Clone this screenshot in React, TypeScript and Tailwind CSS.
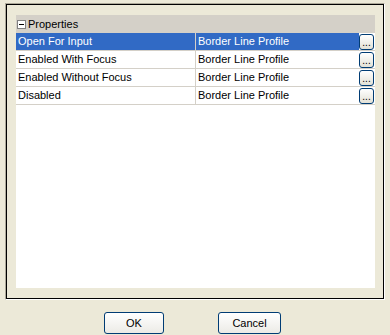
import React from "react";

const rows = [
  { name: "Open For Input", value: "Border Line Profile", selected: true },
  { name: "Enabled With Focus", value: "Border Line Profile" },
  { name: "Enabled Without Focus", value: "Border Line Profile" },
  { name: "Disabled", value: "Border Line Profile" },
];

function EllipsisButton() {
  return (
    <button className="ml-auto mr-[1px] flex h-[16px] w-[15px] items-end justify-center rounded-[3px] border border-[#003c74] bg-gradient-to-b from-white to-[#e3e1d6] pb-[1px] text-[10px] leading-[10px] text-black">
      ...
    </button>
  );
}

function PropertyRow({ name, value, selected }: { name: string; value: string; selected?: boolean }) {
  return (
    <div className="flex h-[18px] border-b border-[#d4d0c8]">
      <div
        className={
          selected
            ? "flex w-[179px] items-center bg-[#316ac5] pl-[2px] text-white"
            : "flex w-[179px] items-center pl-[2px] text-black"
        }
      >
        {name}
      </div>
      <div className="w-px bg-[#d4d0c8]" />
      <div className="flex flex-1 items-center">
        <div
          className={
            selected
              ? "flex h-full w-[163px] items-center bg-[#316ac5] pl-[2px] text-white"
              : "flex h-full w-[163px] items-center pl-[2px] text-black"
          }
        >
          {value}
        </div>
        <EllipsisButton />
      </div>
    </div>
  );
}

function XpButton({ label, width }: { label: string; width: string }) {
  return (
    <button
      className={`${width} h-[22px] rounded-[3px] border border-[#003c74] bg-gradient-to-b from-white to-[#ecebe6] text-[11px] text-black`}
    >
      {label}
    </button>
  );
}

export default function App() {
  return (
    <div
      className="h-[335px] w-[390px] overflow-hidden bg-[#ece9d8] pl-[5px] pt-[3px] text-[11px]"
      style={{ fontFamily: '"Liberation Sans", Arial, sans-serif' }}
    >
      {/* 外框 */}
      <div className="w-[380px] border border-t-[#aca899] border-l-[#aca899] border-r-white border-b-white">
        <div className="border border-black pb-[10px] pl-[9px] pr-[7px] pt-[10px]">
          <div className="h-[273px] w-[359px] bg-white">
            {/* 标题 */}
            <div className="flex h-[18px] items-center gap-[2px] bg-[#d4d0c8] pl-[1px]">
              <div className="flex h-[9px] w-[9px] items-center justify-center border border-[#808080] bg-white">
                <div className="h-px w-[5px] bg-black" />
              </div>
              <span className="text-black">Properties</span>
            </div>
            {rows.map((r) => (
              <PropertyRow key={r.name} {...r} />
            ))}
          </div>
        </div>
      </div>

      {/* 按钮 */}
      <div className="mt-[12px] flex pl-[99px]">
        <XpButton label="OK" width="w-[60px]" />
        <div className="w-[54px]" />
        <XpButton label="Cancel" width="w-[63px]" />
      </div>
    </div>
  );
}
